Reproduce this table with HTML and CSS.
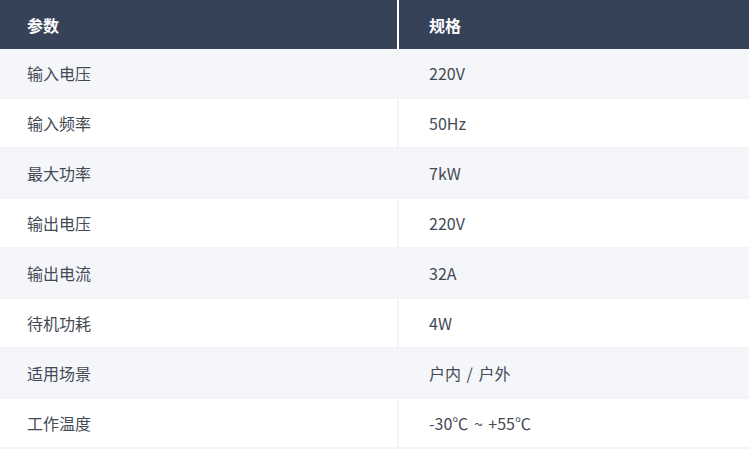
FILE: index.html
```html
<!DOCTYPE html>
<html lang="zh">
<head>
<meta charset="utf-8">
<link rel="stylesheet" href="styles.css">
</head>
<body>
<table class="spec">
  <thead>
    <tr><th class="c1">参数</th><th class="c2">规格</th></tr>
  </thead>
  <tbody>
    <tr class="alt"><td class="c1">输入电压</td><td class="c2">220V</td></tr>
    <tr><td class="c1">输入频率</td><td class="c2">50Hz</td></tr>
    <tr class="alt"><td class="c1">最大功率</td><td class="c2">7kW</td></tr>
    <tr><td class="c1">输出电压</td><td class="c2">220V</td></tr>
    <tr class="alt"><td class="c1">输出电流</td><td class="c2">32A</td></tr>
    <tr><td class="c1">待机功耗</td><td class="c2">4W</td></tr>
    <tr class="alt"><td class="c1">适用场景</td><td class="c2">户内 / 户外</td></tr>
    <tr><td class="c1">工作温度</td><td class="c2">-30℃ ~ +55℃</td></tr>
  </tbody>
</table>
</body>
</html>
```
FILE: styles.css
```css
html, body {
  margin: 0;
  padding: 0;
  background: #ffffff;
}
body {
  font-family: "Noto Sans CJK SC", "Noto Sans", sans-serif;
  font-size: 16px;
  color: #444a55;
}
.spec {
  width: 749px;
  border-collapse: separate;
  border-spacing: 0;
  table-layout: fixed;
}
.spec th, .spec td {
  text-align: left;
  padding: 0;
  vertical-align: middle;
}
.spec .c1 {
  width: 370px;
  padding-left: 27px;
}
.spec .c2 {
  padding-left: 30px;
  border-left: 2px solid #f3f4f8;
  word-spacing: 2px;
}
.spec th {
  height: 49px;
  background: #364258;
  color: #ffffff;
  font-weight: 700;
}
.spec th.c2 {
  border-left-color: #ffffff;
}
.spec td {
  height: 48px;
  border-bottom: 2px solid #f3f4f8;
  font-weight: 400;
}
.spec tr.alt td {
  background: #f5f6fa;
}
```
